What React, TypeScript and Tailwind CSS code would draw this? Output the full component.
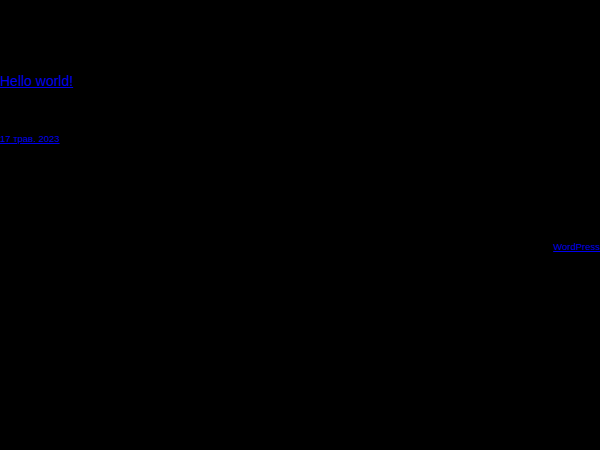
export default function App() {
  return (
    <div className="w-[600px] h-[450px] bg-black overflow-hidden" style={{ fontFamily: '"Liberation Sans", Arial, sans-serif' }}>
      <div className="pt-[72px]">
        <a href="#" className="block text-[14px] leading-[18px] text-[#0000ee] underline">Hello world!</a>
      </div>
      <div className="pt-[43px]">
        <a href="#" className="block text-[9.5px] leading-[12px] text-[#0000ee] underline">17 трав. 2023</a>
      </div>
      <div className="pt-[96px] flex justify-end">
        <a href="#" className="block text-[9.5px] leading-[12px] text-[#0000ee] underline">WordPress</a>
      </div>
    </div>
  );
}
